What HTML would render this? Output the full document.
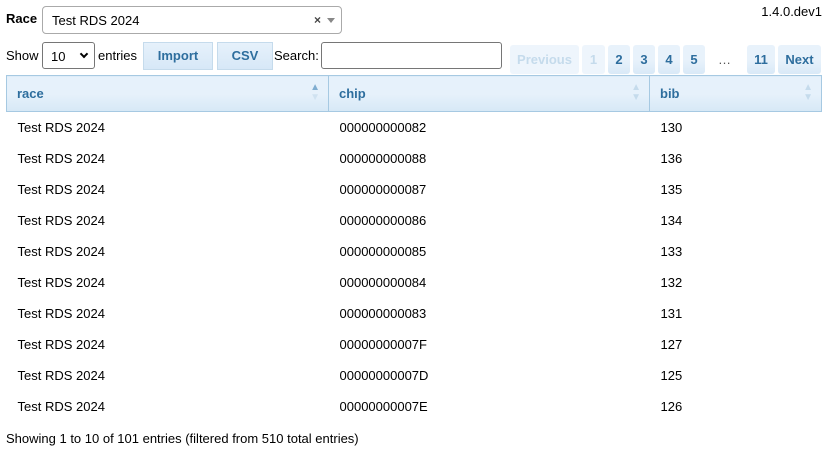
<!DOCTYPE html>
<html><head><style>
*{box-sizing:border-box;margin:0;padding:0}
body{width:828px;height:451px;background:#fff;font-family:"Liberation Sans",sans-serif;font-size:13px;color:#000;position:relative;overflow:hidden}
.a{position:absolute}
.btn{position:absolute;background:linear-gradient(#e6f1fb,#d7e8f7);border:1px solid #c5dbec;color:#2e6e9e;font-weight:bold;text-align:center;font-size:13px}
.pg{position:absolute;top:45px;height:29px;line-height:29px;text-align:center;font-weight:bold;color:#2e6e9e;background:linear-gradient(#e8f2fb 50%,#d9e9f7);border-radius:3px;font-size:13px}
.dis{color:#c5dbec;background:#eef5fc}
table{position:absolute;left:6px;top:75px;width:816px;border-collapse:collapse}
th{height:36px;background:linear-gradient(#e6f1fb 50%,#d6e8f6);border:1px solid #a6c9e2;color:#2e6e9e;text-align:left;padding-left:10px;font-size:13px;position:relative}
td{height:31px;padding-left:11px;font-size:13px}
.s{position:absolute;right:8px;top:7px;font-size:10px;line-height:10px;color:#c5dbec}
</style></head><body>
<div class="a" style="left:6px;top:11px;font-weight:bold">Race</div>
<div class="a" style="left:42px;top:6px;width:300px;height:28px;border:1px solid #aaa;border-radius:4px;padding:6px 0 0 9px">Test RDS 2024
<span class="a" style="left:271px;top:6px;font-weight:bold;font-size:12px;color:#444">×</span><span class="a" style="left:284px;top:11px;border-left:4px solid transparent;border-right:4px solid transparent;border-top:5px solid #888"></span></div>
<div class="a" style="right:6px;top:4px">1.4.0.dev1</div>
<div class="a" style="left:6px;top:48px">Show</div>
<div class="a" style="left:42px;top:42px;width:53px;height:27px;border:1px solid #767676;border-radius:3px;padding:6px 0 0 8px">10<span class="a" style="left:38px;top:8px;width:6px;height:6px;border-right:2px solid #000;border-bottom:2px solid #000;transform:rotate(45deg)"></span></div>
<div class="a" style="left:98px;top:48px">entries</div>
<div class="btn" style="left:143px;top:42px;width:70px;height:28px;line-height:26px">Import</div>
<div class="btn" style="left:217px;top:42px;width:56px;height:28px;line-height:26px">CSV</div>
<div class="a" style="left:274px;top:48px">Search:</div>
<div class="a" style="left:321px;top:42px;width:181px;height:27px;border:1px solid #767676;border-radius:3px"></div>
<div class="pg dis" style="left:510px;width:69px">Previous</div>
<div class="pg dis" style="left:582px;width:23px">1</div>
<div class="pg" style="left:608px;width:22px">2</div>
<div class="pg" style="left:633px;width:22px">3</div>
<div class="pg" style="left:658px;width:22px">4</div>
<div class="pg" style="left:683px;width:22px">5</div>
<div class="a" style="left:718px;top:52px;color:#555">…</div>
<div class="pg" style="left:747px;width:28px">11</div>
<div class="pg" style="left:778px;width:43px">Next</div>
<table>
<tr><th style="width:322px">race<span class="s" style="color:#7fadd0">▲<br><span style="color:#d0e2f1">▼</span></span></th><th style="width:321px">chip<span class="s">▲<br>▼</span></th><th>bib<span class="s">▲<br>▼</span></th></tr>
<tr><td>Test RDS 2024</td><td>000000000082</td><td>130</td></tr>
<tr><td>Test RDS 2024</td><td>000000000088</td><td>136</td></tr>
<tr><td>Test RDS 2024</td><td>000000000087</td><td>135</td></tr>
<tr><td>Test RDS 2024</td><td>000000000086</td><td>134</td></tr>
<tr><td>Test RDS 2024</td><td>000000000085</td><td>133</td></tr>
<tr><td>Test RDS 2024</td><td>000000000084</td><td>132</td></tr>
<tr><td>Test RDS 2024</td><td>000000000083</td><td>131</td></tr>
<tr><td>Test RDS 2024</td><td>00000000007F</td><td>127</td></tr>
<tr><td>Test RDS 2024</td><td>00000000007D</td><td>125</td></tr>
<tr><td>Test RDS 2024</td><td>00000000007E</td><td>126</td></tr>
</table>
<div class="a" style="left:6px;top:431px;font-size:13px">Showing 1 to 10 of 101 entries (filtered from 510 total entries)</div>
</body></html>
